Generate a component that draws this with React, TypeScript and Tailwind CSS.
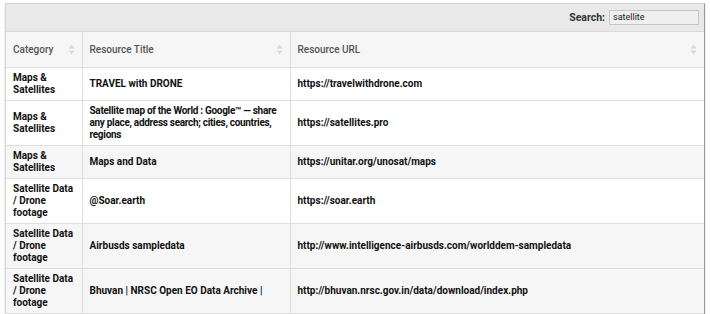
const rows = [
  { cat: 'Maps & Satellites', title: 'TRAVEL with DRONE', url: 'https://travelwithdrone.com', shade: false, tight: false },
  {
    cat: 'Maps & Satellites',
    title: 'Satellite map of the World : Google™ — share\nany place, address search; cities, countries,\nregions',
    url: 'https://satellites.pro',
    shade: false,
    tight: true,
  },
  { cat: 'Maps & Satellites', title: 'Maps and Data', url: 'https://unitar.org/unosat/maps', shade: true, tight: false },
  { cat: 'Satellite Data / Drone footage', title: '@Soar.earth', url: 'https://soar.earth', shade: false, tight: false },
  {
    cat: 'Satellite Data / Drone footage',
    title: 'Airbusds sampledata',
    url: 'http://www.intelligence-airbusds.com/worlddem-sampledata',
    shade: true,
    tight: false,
  },
  {
    cat: 'Satellite Data / Drone footage',
    title: 'Bhuvan | NRSC Open EO Data Archive |',
    url: 'http://bhuvan.nrsc.gov.in/data/download/index.php',
    shade: true,
    tight: false,
  },
];

function SortIcon() {
  return (
    <svg width="7" height="11" viewBox="0 0 7 11" className="shrink-0">
      <path d="M3.5 0.5 L6.5 4.5 H0.5 Z" fill="#d9d9d9" />
      <path d="M3.5 10.5 L6.5 6.5 H0.5 Z" fill="#d9d9d9" />
    </svg>
  );
}

export default function App() {
  return (
    <div
      className="w-[710px] h-[314px] bg-white pt-[3px] px-[5px]"
      style={{ fontFamily: 'Roboto, "Liberation Sans", sans-serif' }}
    >
      <div className="w-[700px] border border-[#d4d4d4] border-r-[#9a9a9a] shadow-[0_1px_2px_rgba(0,0,0,0.18)] bg-white">
        {/* toolbar */}
        <div className="h-[28px] bg-[#e9e9e9] flex items-center justify-end pr-[5px] border-b border-[#d8d8d8]">
          <span className="text-[10.5px] font-bold text-[#333] mr-[4px]">Search:</span>
          <div className="w-[90px] h-[15px] border border-[#c6c6c6] bg-[#efefef] flex items-center px-[3px]">
            <span className="text-[9px] text-[#222]">satellite</span>
          </div>
        </div>

        <table className="w-full table-fixed border-collapse text-[10px]">
          <colgroup>
            <col className="w-[76px]" />
            <col className="w-[208px]" />
            <col />
          </colgroup>
          <thead>
            <tr className="bg-[#f6f6f6] h-[35px] border-b border-[#dedede]">
              {['Category', 'Resource Title', 'Resource URL'].map((h, i) => (
                <th
                  key={h}
                  className={`px-[7px] font-medium text-left text-[#555] ${i < 2 ? 'border-r border-[#dedede]' : ''}`}
                >
                  <div className="flex items-center justify-between">
                    <span>{h}</span>
                    <SortIcon />
                  </div>
                </th>
              ))}
            </tr>
          </thead>
          <tbody>
            {rows.map((r, i) => (
              <tr
                key={i}
                className={`${r.shade ? 'bg-[#f6f6f6]' : 'bg-white'} border-b border-[#dedede] font-bold text-[#111] leading-[12px]`}
              >
                <td className="px-[7px] py-[4px] border-r border-[#dedede] align-middle">{r.cat}</td>
                <td
                  className={`px-[7px] py-[4px] border-r border-[#dedede] align-middle ${
                    r.tight ? 'whitespace-pre tracking-[-0.3px]' : ''
                  }`}
                >
                  {r.title}
                </td>
                <td className="px-[7px] py-[4px] align-middle h-[33px]">{r.url}</td>
              </tr>
            ))}
          </tbody>
        </table>
      </div>
    </div>
  );
}
